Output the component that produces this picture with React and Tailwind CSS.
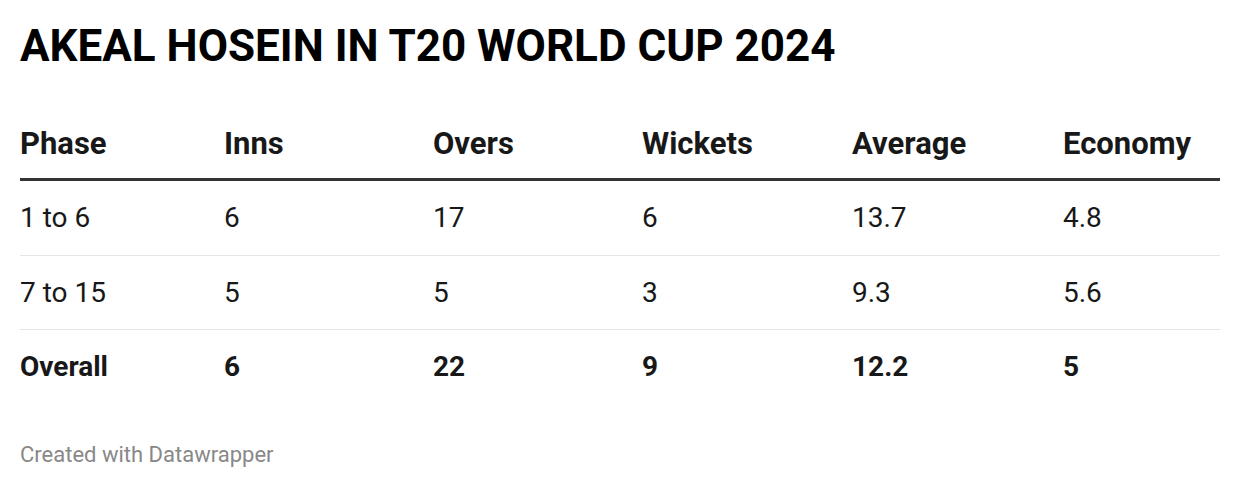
import React from 'react'

const cols = 'grid grid-cols-[204px_209px_209px_210px_211px_1fr] items-center'

const rows = [
    ['1 to 6', '6', '17', '6', '13.7', '4.8'],
    ['7 to 15', '5', '5', '3', '9.3', '5.6'],
]

const total = ['Overall', '6', '22', '9', '12.2', '5']

const App = () => {
    return (
        <div className="w-[1240px] h-[488px] bg-white px-5 pt-[20px] text-[#181818] font-['Roboto',sans-serif]">
            {/* Title */}
            <h1 className="text-[44px] font-bold leading-[52px] text-black">
                AKEAL HOSEIN IN T20 WORLD CUP 2024
            </h1>

            {/* Table */}
            <div className="mt-[54px]">
                <div className={`${cols} h-[55px] pb-[16px] text-[31px] leading-[36px] font-bold border-b-[3px] border-[#333333]`}>
                    {['Phase', 'Inns', 'Overs', 'Wickets', 'Average', 'Economy'].map((h) => (
                        <div key={h}>{h}</div>
                    ))}
                </div>
                <div className={`${cols} h-[75px] text-[28px] border-b border-[#e5e5e5]`}>
                    {rows[0].map((c, j) => (
                        <div key={j}>{c}</div>
                    ))}
                </div>
                <div className={`${cols} h-[74px] text-[28px] border-b border-[#e5e5e5]`}>
                    {rows[1].map((c, j) => (
                        <div key={j}>{c}</div>
                    ))}
                </div>
                <div className={`${cols} h-[73px] text-[28px] font-bold`}>
                    {total.map((c, j) => (
                        <div key={j}>{c}</div>
                    ))}
                </div>
            </div>

            {/* Footer */}
            <div className="mt-[39px] text-[22px] leading-[26px] text-[#888888]">
                Created with Datawrapper
            </div>
        </div>
    )
}

export default App
